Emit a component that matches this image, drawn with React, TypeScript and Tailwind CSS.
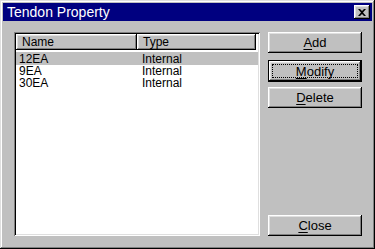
const rows = [
  { name: "12EA", type: "Internal", selected: true },
  { name: "9EA", type: "Internal", selected: false },
  { name: "30EA", type: "Internal", selected: false },
];

const raised =
  "shadow-[inset_-1px_-1px_#000,inset_1px_1px_#fff,inset_-2px_-2px_#808080,inset_2px_2px_#dfdfdf]";

const Btn = ({ u, rest, def }: { u: string; rest: string; def?: boolean }) => {
  if (def) {
    return (
      <div className="h-[22px] w-[94px] border border-black bg-[#c0c0c0]">
        <div className={`flex h-full w-full items-center justify-center p-[3px] ${raised}`}>
          <div className="flex h-full w-full items-center justify-center border border-dotted border-black text-[13px] leading-none text-black">
            <span className="underline underline-offset-2">{u}</span>
            {rest}
          </div>
        </div>
      </div>
    );
  }
  return (
    <div className={`flex h-[21px] w-[94px] items-center justify-center bg-[#c0c0c0] text-[13px] leading-none text-black ${raised}`}>
      <span className="underline underline-offset-2">{u}</span>
      {rest}
    </div>
  );
};

const App = (): JSX.Element => {
  return (
    <div
      className="flex h-[249px] w-[375px] flex-col bg-[#c0c0c0] p-[3px] shadow-[inset_-1px_-1px_#000,inset_1px_1px_#dfdfdf,inset_-2px_-2px_#808080,inset_2px_2px_#fff]"
      style={{ fontFamily: '"Liberation Sans", Arial, sans-serif' }}
    >
      {/* title bar */}
      <div className="flex h-[18px] items-center justify-between bg-[#000080] pl-[4px] pr-[2px]">
        <span className="text-[14px] leading-none text-white">Tendon Property</span>
        <div className={`flex h-[14px] w-[16px] items-center justify-center bg-[#c0c0c0] ${raised}`}>
          <svg width="8" height="7" viewBox="0 0 8 7">
            <path d="M0 0h2l2 2 2-2h2L5 3.5 8 7H6L4 5 2 7H0l3-3.5z" fill="#000" />
          </svg>
        </div>
      </div>

      <div className="flex flex-1 gap-[8px] pl-[11px] pr-[10px] pt-[11px] pb-[10px]">
        {/* list view */}
        <div className="h-[204px] w-[246px] bg-white p-[2px] shadow-[inset_1px_1px_#808080,inset_-1px_-1px_#fff,inset_2px_2px_#000,inset_-2px_-2px_#dfdfdf]">
          <div className="flex h-[16px] text-[12px] leading-none text-black">
            <div className={`flex w-[121px] items-center bg-[#c0c0c0] pl-[6px] ${raised}`}>Name</div>
            <div className={`flex w-[119px] items-center bg-[#c0c0c0] pl-[6px] ${raised}`}>Type</div>
          </div>
          <div className="mt-[2px] flex flex-col">
            {rows.map((r) => (
              <div
                key={r.name}
                className={`flex items-center text-[12px] leading-[12px] text-black ${r.selected ? "h-[13px] bg-[#c0c0c0]" : "h-[12px]"}`}
              >
                <span className="w-[126px] pl-[3px]">{r.name}</span>
                <span>{r.type}</span>
              </div>
            ))}
          </div>
        </div>

        {/* buttons */}
        <div className="flex flex-col">
          <Btn u="A" rest="dd" />
          <div className="mt-[7px]">
            <Btn u="M" rest="odify" def />
          </div>
          <div className="mt-[5px]">
            <Btn u="D" rest="elete" />
          </div>
          <div className="mt-auto">
            <Btn u="C" rest="lose" />
          </div>
        </div>
      </div>
    </div>
  );
};

export default App;
